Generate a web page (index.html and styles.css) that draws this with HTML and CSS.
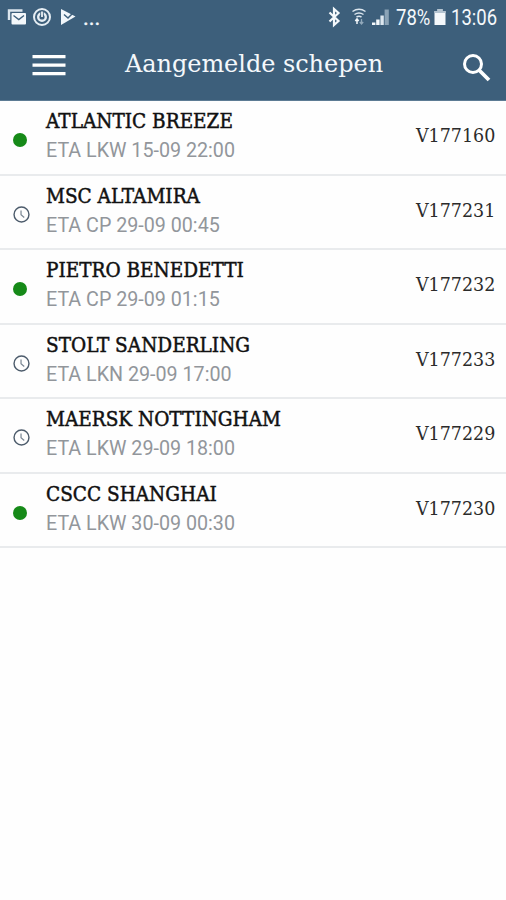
FILE: index.html
```html
<!doctype html>
<html lang="nl">
  <head>
    <meta charset="utf-8" />
    <title>Aangemelde schepen</title>
    <link rel="stylesheet" href="styles.css" />
  </head>
  <body>
    <svg width="0" height="0" class="symbols">
      <symbol id="clock" viewBox="0 0 18 18">
        <circle cx="9" cy="9" r="7.900" fill="none" stroke="#4d5c6c" stroke-width="1.500" />
        <path d="M8.500 4.800v4.500l3.400 2.900" fill="none" stroke="#7b8794" stroke-width="1.300" />
      </symbol>
    </svg>
    <header class="header">
      <div class="statusbar">
        <div class="notifications">
          <svg width="96" height="36" viewBox="0 0 96 36">
            <path d="M9 20V10.500h13.500" fill="none" stroke="#dce6ee" stroke-width="2.400" />
            <rect x="11.500" y="13" width="14.500" height="11.500" rx="1" fill="#f4f8fb" />
            <path d="M13.500 15.500l5.300 4 5.200-4" fill="none" stroke="#3d5f7b" stroke-width="1.400" />
            <circle cx="42" cy="17" r="8" fill="none" stroke="#e6eef4" stroke-width="2" />
            <circle cx="42" cy="17" r="3.800" fill="none" stroke="#e6eef4" stroke-width="2.400" />
            <path d="M42 11v6" stroke="#3d5f7b" stroke-width="3.500" />
            <path d="M42 11.500v5.500" stroke="#f4f8fb" stroke-width="1.700" />
            <path d="M61 9l14.500 7.500L61 25z" fill="#f1f6fa" />
            <path d="M64 14.500l4 3.500 6-6" fill="none" stroke="#3d5f7b" stroke-width="1.500" />
          </svg>
          <span class="more">...</span>
        </div>
        <div class="system">
          <svg width="66" height="36" viewBox="325 0 66 36">
            <path d="M329.500 12.500l9 8.500-4.500 4V9l4.500 4-9 8.500" fill="none" stroke="#f4f8fb" stroke-width="2.200" />
            <path d="M352.500 11.500q6.500-4.500 13 0M354.500 14.500q4.500-3 9 0M356.500 17q2.500-1.500 5 0" fill="none" stroke="#dce6ee" stroke-width="1.500" />
            <path d="M357 19v5M355.300 21l1.700-2 1.700 2" fill="none" stroke="#f4f8fb" stroke-width="1.500" />
            <path d="M361.500 19v5M359.800 22l1.700 2 1.700-2" fill="none" stroke="#91a8ba" stroke-width="1.300" />
            <path d="M372 22.500h3.400V25H372zM376.200 19.500h3.400V25h-3.400z" fill="#f4f8fb" />
            <path d="M380.400 15.500h3.400V25h-3.400z" fill="#dce6ee" />
            <path d="M384.600 9.500h4.200V25h-4.200z" fill="#8ba3b6" />
          </svg>
          <span class="battery-level">78%</span>
          <svg width="12" height="36" viewBox="0 0 12 36">
            <path d="M3.500 9h5v2h3v14H.5V11h3z" fill="#f4f8fb" />
            <path d="M3.500 9h5v2h3v2H.5v-2h3z" fill="#b4c4d1" />
          </svg>
          <span class="time">13:06</span>
        </div>
      </div>
      <div class="toolbar">
        <svg class="menu" width="34" height="26" viewBox="0 0 34 26">
          <path d="M.5 3.700h33M.5 12.200h33M.5 20.700h33" stroke="#fff" stroke-width="3.200" />
        </svg>
        <h1 class="title">Aangemelde schepen</h1>
        <svg class="search" width="30" height="30" viewBox="0 0 30 30">
          <circle cx="11" cy="11" r="8.500" fill="none" stroke="#fff" stroke-width="3" />
          <path d="M17 17l10 10" stroke="#fff" stroke-width="3.800" />
        </svg>
      </div>
    </header>
    <ul class="ships">
      <li class="ship">
        <div class="status"><span class="dot"></span></div>
        <div class="details">
          <div class="name">ATLANTIC BREEZE</div>
          <div class="eta">ETA LKW 15-09 22:00</div>
        </div>
        <div class="code">V177160</div>
      </li>
      <li class="ship">
        <div class="status"><svg class="clock"><use href="#clock" /></svg></div>
        <div class="details">
          <div class="name">MSC ALTAMIRA</div>
          <div class="eta">ETA CP 29-09 00:45</div>
        </div>
        <div class="code">V177231</div>
      </li>
      <li class="ship">
        <div class="status"><span class="dot"></span></div>
        <div class="details">
          <div class="name">PIETRO BENEDETTI</div>
          <div class="eta">ETA CP 29-09 01:15</div>
        </div>
        <div class="code">V177232</div>
      </li>
      <li class="ship">
        <div class="status"><svg class="clock"><use href="#clock" /></svg></div>
        <div class="details">
          <div class="name">STOLT SANDERLING</div>
          <div class="eta">ETA LKN 29-09 17:00</div>
        </div>
        <div class="code">V177233</div>
      </li>
      <li class="ship">
        <div class="status"><svg class="clock"><use href="#clock" /></svg></div>
        <div class="details">
          <div class="name">MAERSK NOTTINGHAM</div>
          <div class="eta">ETA LKW 29-09 18:00</div>
        </div>
        <div class="code">V177229</div>
      </li>
      <li class="ship">
        <div class="status"><span class="dot"></span></div>
        <div class="details">
          <div class="name">CSCC SHANGHAI</div>
          <div class="eta">ETA LKW 30-09 00:30</div>
        </div>
        <div class="code">V177230</div>
      </li>
    </ul>
  </body>
</html>
```
FILE: styles.css
```css
* {
  box-sizing: border-box;
}

body {
  margin: 0;
  min-height: 900px;
  background: #fefefe;
  font-family: Roboto, sans-serif;
}

svg {
  display: block;
  flex: none;
}

.symbols {
  position: absolute;
}

.header {
  height: 101px;
  background: #3d5f7b;
  border-bottom: 1px solid #5d7b94;
  color: #f4f8fb;
}

.statusbar {
  display: flex;
  justify-content: space-between;
  height: 36px;
  padding-right: 9px;
  font-size: 22px;
  line-height: 36px;
}

.notifications,
.system {
  display: flex;
}

.more {
  margin-left: -13px;
  -webkit-text-stroke: 0.4px #f4f8fb;
}

.system span {
  transform-origin: left;
  white-space: nowrap;
}

.battery-level {
  width: 38px;
  margin-left: 5px;
  transform: scaleX(0.84);
}

.system .battery-level + svg {
  margin-right: 5px;
}

.time {
  width: 46px;
  transform: scaleX(0.84);
}

.toolbar {
  display: flex;
  align-items: flex-start;
  padding: 0 14px 0 32px;
}

.menu {
  margin-top: 17px;
}

.title {
  flex: 1;
  margin: 11px 0 0 59px;
  font: 400 24px/34px "DejaVu Serif", serif;
  letter-spacing: -0.05px;
  white-space: nowrap;
}

.search {
  margin-top: 17px;
}

/* list */
.ships {
  margin: 0;
  padding: 0;
  list-style: none;
}

.ship {
  display: flex;
  height: 74.5px;
  padding-right: 11px;
  border-bottom: 2px solid #e9ebed;
}

.status {
  width: 46px;
  padding: 32px 0 0 13px;
}

.dot {
  display: block;
  width: 14px;
  height: 14px;
  border-radius: 50%;
  background: #168a18;
}

.clock {
  width: 17px;
  height: 17px;
  margin-top: -2px;
}

.details {
  flex: 1;
  padding-top: 7px;
}

.name {
  font: 400 19.5px/28px "DejaVu Serif", serif;
  color: #111;
  -webkit-text-stroke: 0.5px #111;
  white-space: nowrap;
  transform: scaleX(0.948);
  transform-origin: left;
}

.eta {
  font-size: 20px;
  line-height: 28px;
  color: #92969b;
  transform: scaleX(0.984);
  transform-origin: left;
}

.code {
  padding-top: 19px;
  font: 400 19px/30px "DejaVu Serif", serif;
  color: #2b2b2b;
  transform: scaleX(0.92);
  transform-origin: right;
}
```
